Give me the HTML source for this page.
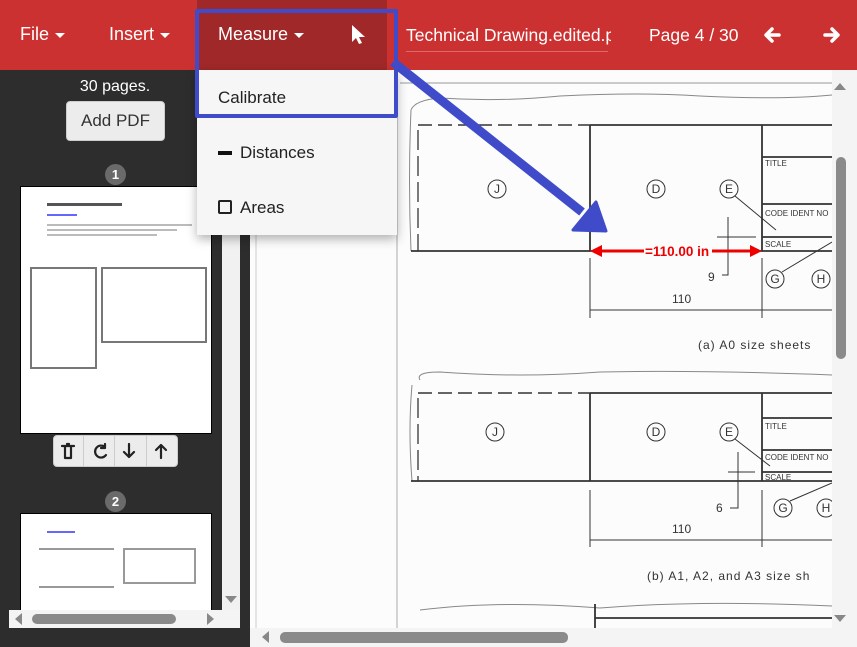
<!DOCTYPE html>
<html><head><meta charset="utf-8"><style>
*{margin:0;padding:0;box-sizing:border-box}
body{width:857px;height:647px;overflow:hidden;position:relative;background:#2d2d2d;font-family:"Liberation Sans",Roboto,sans-serif}
.hdr{position:absolute;left:0;top:0;width:857px;height:70px;background:#cc3131}
.t{position:absolute;color:#fff;font-size:18px;white-space:nowrap}
.car{display:inline-block;width:0;height:0;border-left:5px solid transparent;border-right:5px solid transparent;border-top:5px solid #fff;vertical-align:middle;margin-left:6px}
.abs{position:absolute}
</style></head><body>
<div class="hdr"></div>
<div class="abs" style="left:197px;top:0;width:190px;height:70px;background:#a02828"></div>
<div class="t" style="left:20px;top:24px">File<span class="car"></span></div>
<div class="t" style="left:109px;top:24px">Insert<span class="car"></span></div>
<div class="t" style="left:218px;top:24px">Measure<span class="car"></span></div>
<svg class="abs" style="left:350px;top:24px" width="18" height="22" viewBox="0 0 18 22"><path d="M2 1 L2 18 L6 14 L9 20 L12 19 L9 13 L15 13 Z" fill="#fff"/></svg>
<div class="t" style="left:406px;top:25px;width:205px;overflow:hidden;font-size:17.5px">Technical Drawing.edited.pdf</div>
<div class="abs" style="left:406px;top:51px;width:202px;height:1px;background:#dd6a6a"></div>
<div class="t" style="left:649px;top:25px;font-size:17.5px">Page 4 / 30</div>
<svg class="abs" style="left:762px;top:25px" width="20" height="20" viewBox="0 0 20 20"><path d="M17 10H5M10 4L4 10L10 16" stroke="#fff" stroke-width="3.5" fill="none" stroke-linecap="round" stroke-linejoin="round"/></svg>
<svg class="abs" style="left:822px;top:25px" width="20" height="20" viewBox="0 0 20 20"><path d="M3 10H15M10 4L16 10L10 16" stroke="#fff" stroke-width="3.5" fill="none" stroke-linecap="round" stroke-linejoin="round"/></svg>

<!-- sidebar -->
<div class="t" style="left:0;width:230px;text-align:center;top:78px;font-size:16px">30 pages.</div>
<div class="abs" style="left:66px;top:101px;width:99px;height:40px;background:#ececec;border-radius:4px;border:1px solid #ccc;font-size:17px;color:#333;text-align:center;line-height:38px">Add PDF</div>
<div class="abs" style="left:222px;top:70px;width:18px;height:540px;background:#f1f1f1"></div>
<div class="abs" style="left:225px;top:596px;width:0;height:0;border-left:6px solid transparent;border-right:6px solid transparent;border-top:7px solid #888"></div>
<div class="abs" style="left:105px;top:164px;width:21px;height:21px;border-radius:50%;background:#6a6a6a;color:#fff;font-size:13px;font-weight:bold;text-align:center;line-height:21px">1</div>
<div class="abs" style="left:20px;top:186px;width:192px;height:248px;background:#fff;border:1px solid #000">
<div class="abs" style="left:26px;top:16px;width:75px;height:3px;background:#555"></div>
<div class="abs" style="left:26px;top:27px;width:30px;height:2px;background:#66f"></div>
<div class="abs" style="left:26px;top:37px;width:145px;height:2px;background:#bbb"></div>
<div class="abs" style="left:26px;top:42px;width:130px;height:2px;background:#bbb"></div>
<div class="abs" style="left:26px;top:47px;width:110px;height:2px;background:#bbb"></div>
<div class="abs" style="left:9px;top:80px;width:67px;height:102px;border:2px solid #777"></div>
<div class="abs" style="left:80px;top:80px;width:106px;height:76px;border:2px solid #777"></div>
</div>
<div class="abs" style="left:53px;top:435px;width:125px;height:32px;background:#ececec;border-radius:4px;border:1px solid #ccc"></div>
<div class="abs" style="left:83px;top:436px;width:1px;height:30px;background:#ccc"></div>
<div class="abs" style="left:114px;top:436px;width:1px;height:30px;background:#ccc"></div>
<div class="abs" style="left:146px;top:436px;width:1px;height:30px;background:#ccc"></div>
<svg class="abs" style="left:53px;top:435px" width="125" height="32" viewBox="0 0 125 32">
<g fill="none" stroke="#222" stroke-width="2.2" stroke-linecap="round" stroke-linejoin="round">
<path d="M9 11H21M12 11V23H18V11M14 9H16"/><path d="M52 12A6 6 0 1 0 53 20M52 9V13H48"/>
<path d="M76 9V22M71 17L76 22L81 17"/><path d="M108 23V10M103 15L108 10L113 15"/></g></svg>
<div class="abs" style="left:105px;top:491px;width:21px;height:21px;border-radius:50%;background:#6a6a6a;color:#fff;font-size:13px;font-weight:bold;text-align:center;line-height:21px">2</div>
<div class="abs" style="left:20px;top:513px;width:192px;height:97px;background:#fff;border:1px solid #000;border-bottom:none">
<div class="abs" style="left:26px;top:17px;width:28px;height:2px;background:#66f"></div>
<div class="abs" style="left:18px;top:34px;width:75px;height:40px;border-top:2px solid #999;border-bottom:2px solid #999"></div>
<div class="abs" style="left:102px;top:34px;width:73px;height:36px;border:2px solid #999"></div>
</div>
<div class="abs" style="left:9px;top:610px;width:231px;height:18px;background:#f4f4f4"></div>
<div class="abs" style="left:32px;top:614px;width:144px;height:10px;border-radius:5px;background:#8a8a8a"></div>
<div class="abs" style="left:15px;top:613px;width:0;height:0;border-top:6px solid transparent;border-bottom:6px solid transparent;border-right:7px solid #888"></div>
<div class="abs" style="left:207px;top:613px;width:0;height:0;border-top:6px solid transparent;border-bottom:6px solid transparent;border-left:7px solid #888"></div>

<!-- main -->
<div class="abs" style="left:250px;top:70px;width:607px;height:558px;background:#fcfcfc"></div>
<div class="abs" style="left:250px;top:628px;width:607px;height:19px;background:#f4f4f4"></div>
<div class="abs" style="left:280px;top:632px;width:288px;height:11px;border-radius:5px;background:#8a8a8a"></div>
<div class="abs" style="left:262px;top:631px;width:0;height:0;border-top:6px solid transparent;border-bottom:6px solid transparent;border-right:7px solid #888"></div>
<div class="abs" style="left:832px;top:70px;width:25px;height:558px;background:#f4f4f4"></div>
<div class="abs" style="left:836px;top:157px;width:10px;height:202px;border-radius:5px;background:#8a8a8a"></div>
<div class="abs" style="left:834px;top:83px;width:0;height:0;border-left:6px solid transparent;border-right:6px solid transparent;border-bottom:7px solid #888"></div>
<div class="abs" style="left:834px;top:615px;width:0;height:0;border-left:6px solid transparent;border-right:6px solid transparent;border-top:7px solid #888"></div>

<svg class="abs" style="left:0;top:0" width="832" height="628" viewBox="0 0 832 628">
<g stroke="#333" fill="none" font-family="Liberation Sans,sans-serif">
<line x1="256" y1="78" x2="256" y2="628" stroke="#ccc"/>
<line x1="397" y1="78" x2="397" y2="628" stroke="#aaa"/>
<line x1="400" y1="83" x2="832" y2="83" stroke="#999"/>
<path d="M411 110 Q415 100 440 98 Q500 102 560 96 Q640 92 700 96 Q780 100 832 95" stroke="#888"/>
<path d="M411 110 Q408 180 411 251" stroke="#888"/>
<path d="M418 125H590" stroke-dasharray="14 6" stroke-width="1.5"/>
<path d="M418 130V251" stroke-dasharray="20 6" stroke-width="1.3"/>
<path d="M590 125H832M590 125V251M762 125V251M411 251H832M762 157H832M762 204H832M762 237H832" stroke-width="1.8"/>
<circle cx="497" cy="189" r="9"/><circle cx="656" cy="189" r="9"/><circle cx="729" cy="189" r="9"/><circle cx="775" cy="279" r="9"/><circle cx="821" cy="279" r="9"/>
<path d="M735 196L776 230M782 272L832 242M717 237H756M728 217V275H722M590 258V318M762 258V318M590 310H832" stroke-width="1"/>
<path d="M420 380 Q415 372 440 372 Q520 378 600 372 Q700 370 832 375" stroke="#888"/>
<path d="M412 385 Q408 430 412 481" stroke="#888"/>
<path d="M418 393H590" stroke-dasharray="14 6" stroke-width="1.5"/>
<path d="M418 398V481" stroke-dasharray="20 6" stroke-width="1.3"/>
<path d="M590 393H832M590 393V481M762 393V481M411 481H832M762 418H832M762 450H832M762 472H832" stroke-width="1.8"/>
<circle cx="495" cy="432" r="9"/><circle cx="656" cy="432" r="9"/><circle cx="729" cy="432" r="9"/><circle cx="783" cy="508" r="9"/><circle cx="826" cy="508" r="9"/>
<path d="M735 439L770 466M790 501L832 483M728 472H755M738 452V508H730M590 490V547M762 490V547M590 540H832" stroke-width="1"/>
<path d="M420 610 Q500 600 600 608 Q700 600 832 606" stroke="#888"/>
<path d="M595 618H832M595 604V628" stroke-width="1.8"/>
<g fill="#333" stroke="none" font-size="12" text-anchor="middle">
<text x="497" y="193">J</text><text x="656" y="193">D</text><text x="729" y="193">E</text><text x="775" y="283">G</text><text x="821" y="283">H</text>
<text x="495" y="436">J</text><text x="656" y="436">D</text><text x="729" y="436">E</text><text x="783" y="512">G</text><text x="826" y="512">H</text>
</g>
<g fill="#333" stroke="none" font-size="12">
<text x="765" y="166" font-size="8">TITLE</text><text x="765" y="216" font-size="8">CODE IDENT NO</text><text x="765" y="247" font-size="8">SCALE</text>
<text x="765" y="429" font-size="8">TITLE</text><text x="765" y="460" font-size="8">CODE IDENT NO</text><text x="765" y="480" font-size="8">SCALE</text>
<text x="672" y="303">110</text><text x="708" y="281">9</text>
<text x="672" y="533">110</text><text x="716" y="512">6</text>
<text x="698" y="349" letter-spacing="1">(a) A0 size sheets</text>
<text x="647" y="580" letter-spacing="1">(b) A1, A2, and A3 size sh</text>
</g>
<rect x="644" y="243" width="68" height="16" fill="#fcfcfc" stroke="none"/>
<path d="M598 251H644M712 251H754" stroke="#e00" stroke-width="3"/>
<path d="M590 251L602 245V257Z M762 251L750 245V257Z" fill="#e00" stroke="none"/>
<text x="645" y="256" fill="#e00" stroke="none" font-size="13.5" font-weight="bold">=110.00 in</text>
</g>
<path d="M393 62 L582 212" stroke="#3f4bc9" stroke-width="9"/>
<path d="M606 231 L573 230 L596 202 Z" fill="#3f4bc9" stroke="#3f4bc9" stroke-width="3" stroke-linejoin="round"/>
</svg>

<!-- dropdown -->
<div class="abs" style="left:197px;top:70px;width:200px;height:165px;background:#f6f6f6;box-shadow:0 4px 10px rgba(0,0,0,0.3)"></div>
<div class="abs" style="left:218px;top:88px;font-size:17px;color:#222">Calibrate</div>
<div class="abs" style="left:218px;top:151px;width:14px;height:4px;background:#111"></div>
<div class="abs" style="left:240px;top:143px;font-size:17px;color:#222">Distances</div>
<div class="abs" style="left:218px;top:200px;width:14px;height:14px;border:2px solid #222;border-radius:2px"></div>
<div class="abs" style="left:240px;top:198px;font-size:17px;color:#222">Areas</div>
<div class="abs" style="left:195px;top:9px;width:203px;height:109px;border:4px solid #3f4bc9;border-radius:2px"></div>
</body></html>
